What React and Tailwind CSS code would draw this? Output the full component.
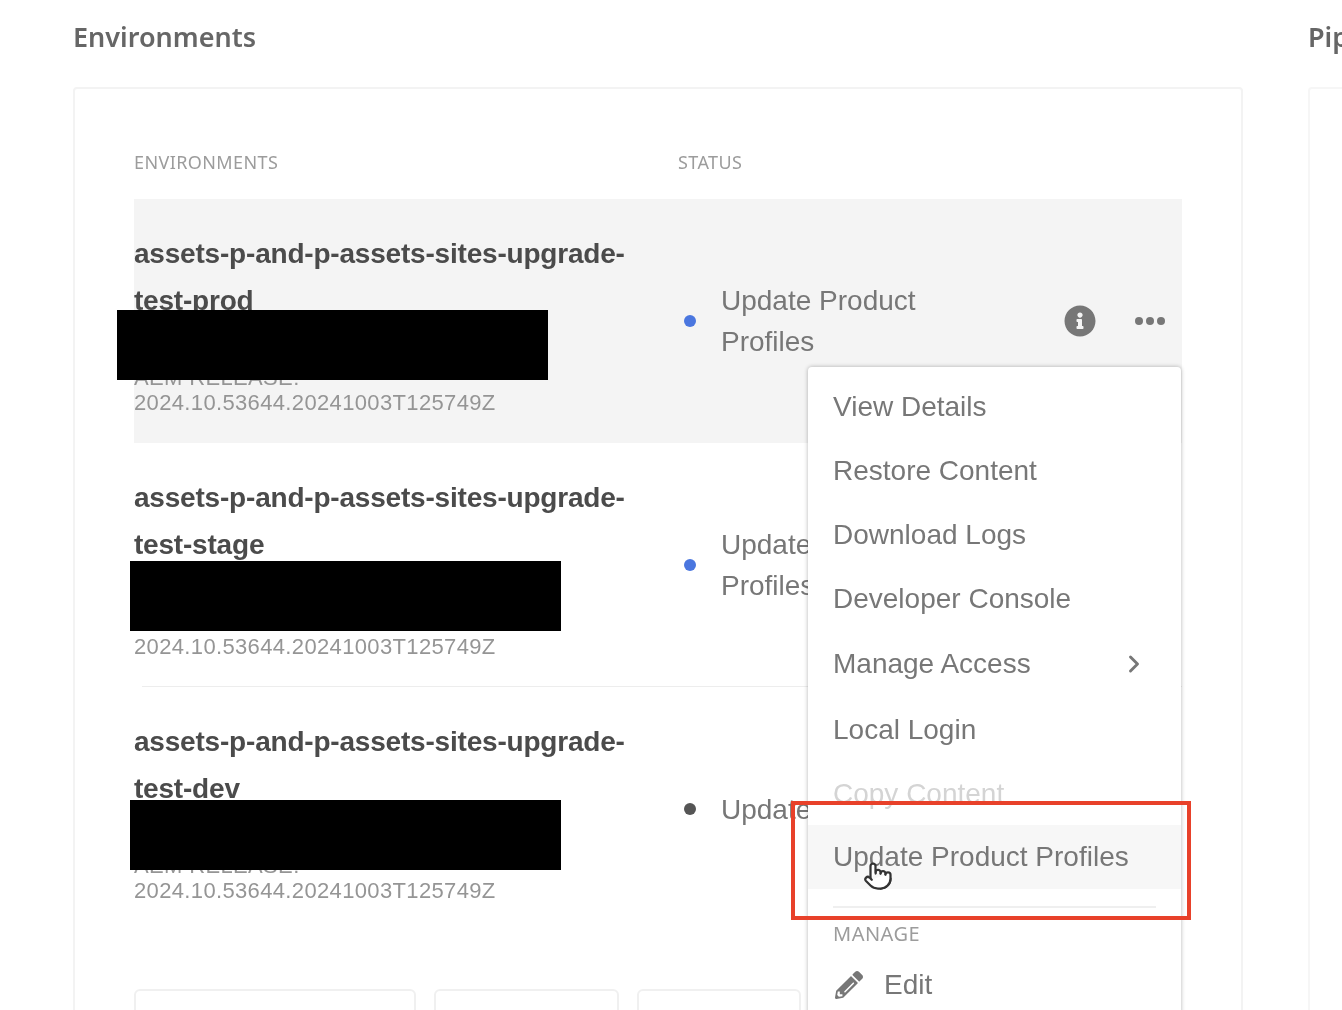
import { ChevronRight, Pointer } from "lucide-react";
import { FaPencilAlt, FaInfoCircle } from "react-icons/fa";

const rows = [
  { name: "test-prod", status: ["Update Product", "Profiles"], dot: "bg-[#4a76df]", active: true },
  { name: "test-stage", status: ["Update Product", "Profiles"], dot: "bg-[#4a76df]", divider: true },
  { name: "test-dev", status: ["Update"], dot: "bg-[#555555]" },
];

const menuItems = [
  { label: "View Details", h: "h-[64px]" },
  { label: "Restore Content", h: "h-[64px]" },
  { label: "Download Logs", h: "h-[64px]" },
  { label: "Developer Console", h: "h-[64px]" },
  { label: "Manage Access", h: "h-[66px]", arrow: true },
  { label: "Local Login", h: "h-[66px]" },
  { label: "Copy Content", h: "h-[62px]", disabled: true },
  { label: "Update Product Profiles", h: "h-[64px]", hover: true },
];

function Row({ row }) {
  return (
    <div className={`relative flex h-[244px] ${row.active ? "bg-[#f4f4f4]" : ""}`}>
      <div className="w-[544px] shrink-0 pt-[31px]">
        <div className="text-[28px] leading-[47px] font-bold tracking-[-0.2px] text-[#4b4b4b]">
          assets-p-and-p-assets-sites-upgrade-
          <br />
          {row.name}
        </div>
        <div className="mt-[41px] text-[22px] leading-[25px] tracking-[0.35px] text-[#959595]">
          AEM RELEASE:
          <br />
          2024.10.53644.20241003T125749Z
        </div>
      </div>
      <div className="flex flex-1 items-center">
        <span className={`ml-[6px] h-[12px] w-[12px] rounded-full ${row.dot}`} />
        <div className="ml-[25px] w-[250px] text-[28px] leading-[41px] text-[#777777]">
          {row.status.map((s) => (
            <div key={s}>{s}</div>
          ))}
        </div>
        {row.active && (
          <div className="ml-[93px] flex items-center">
            <FaInfoCircle className="text-[32px] text-[#777777]" />
            <div className="ml-[39px] flex gap-[3px]">
              <span className="h-[8px] w-[8px] rounded-full bg-[#777777]" />
              <span className="h-[8px] w-[8px] rounded-full bg-[#777777]" />
              <span className="h-[8px] w-[8px] rounded-full bg-[#777777]" />
            </div>
          </div>
        )}
      </div>
      {row.divider && <div className="absolute bottom-0 left-[8px] right-0 h-px bg-[#ededed]" />}
    </div>
  );
}

export default function App() {
  return (
    <div className="relative h-[1010px] w-[1342px] overflow-hidden bg-white font-['Liberation_Sans',sans-serif]">
      <div className="flex pl-[73px] blur-[0.6px]">
        <section className="w-[1170px] shrink-0">
          <h2 className="h-[87px] pt-[18px] font-['Noto_Sans',sans-serif] text-[27px] leading-[37px] font-semibold text-[#666666]">
            Environments
          </h2>
          <div className="h-[1000px] rounded-[4px] border-2 border-[#f3f3f3] px-[59px] pt-[58px]">
            <div className="flex h-[52px] font-['Noto_Sans',sans-serif] text-[18px] leading-[30px] tracking-[0.4px] text-[#9c9c9c]">
              <div className="w-[544px]">ENVIRONMENTS</div>
              <div>STATUS</div>
            </div>
            {rows.map((row) => (
              <Row key={row.name} row={row} />
            ))}
            <div className="mt-[58px] flex gap-[18px]">
              <div className="h-[60px] w-[282px] rounded-[6px] border-2 border-[#f0f0f0]" />
              <div className="h-[60px] w-[185px] rounded-[6px] border-2 border-[#f0f0f0]" />
              <div className="h-[60px] w-[164px] rounded-[6px] border-2 border-[#f0f0f0]" />
            </div>
          </div>
        </section>
        <section className="ml-[65px] w-[400px] shrink-0">
          <h2 className="h-[87px] pt-[18px] font-['Noto_Sans',sans-serif] text-[27px] leading-[37px] font-semibold text-[#666666]">
            Pipelines
          </h2>
          <div className="h-[1000px] rounded-[4px] border-2 border-[#f6f6f6]" />
        </section>
      </div>

      {/* dropdown menu */}
      <div className="absolute left-[808px] top-[367px] h-[700px] w-[373px] rounded-[4px] bg-white pt-[8px] shadow-[0_0_4px_rgba(0,0,0,0.3)] blur-[0.5px]">
        {menuItems.map((item) => (
          <div
            key={item.label}
            className={`flex items-center justify-between px-[25px] text-[28px] ${item.h} ${
              item.hover ? "bg-[#f7f7f7]" : ""
            } ${item.disabled ? "text-[#d4d4d4]" : "text-[#777777]"}`}
          >
            <span>{item.label}</span>
            {item.arrow && <ChevronRight size={28} strokeWidth={2.5} className="mr-[8px] text-[#777777]" />}
          </div>
        ))}
        <div className="mx-[25px] mt-[17px] h-[2px] bg-[#efefef]" />
        <div className="px-[25px] pt-[12px] font-['Noto_Sans',sans-serif] text-[20px] leading-[28px] tracking-[0.5px] text-[#9c9c9c]">
          MANAGE
        </div>
        <div className="flex h-[74px] items-center gap-[21px] px-[27px] text-[28px] text-[#777777]">
          <FaPencilAlt className="-scale-x-100 rotate-90 text-[28px]" />
          <span>Edit</span>
        </div>
      </div>

      {/* redactions */}
      <div className="absolute left-[117px] top-[310px] h-[70px] w-[431px] bg-black" />
      <div className="absolute left-[130px] top-[561px] h-[70px] w-[431px] bg-black" />
      <div className="absolute left-[130px] top-[800px] h-[70px] w-[431px] bg-black" />

      {/* callout */}
      <div className="absolute left-[791px] top-[801px] h-[119px] w-[400px] border-[4px] border-[#e8412a]" />
      <Pointer size={30} fill="#ffffff" strokeWidth={1.8} className="absolute left-[863px] top-[861px] text-[#333333]" />
    </div>
  );
}
